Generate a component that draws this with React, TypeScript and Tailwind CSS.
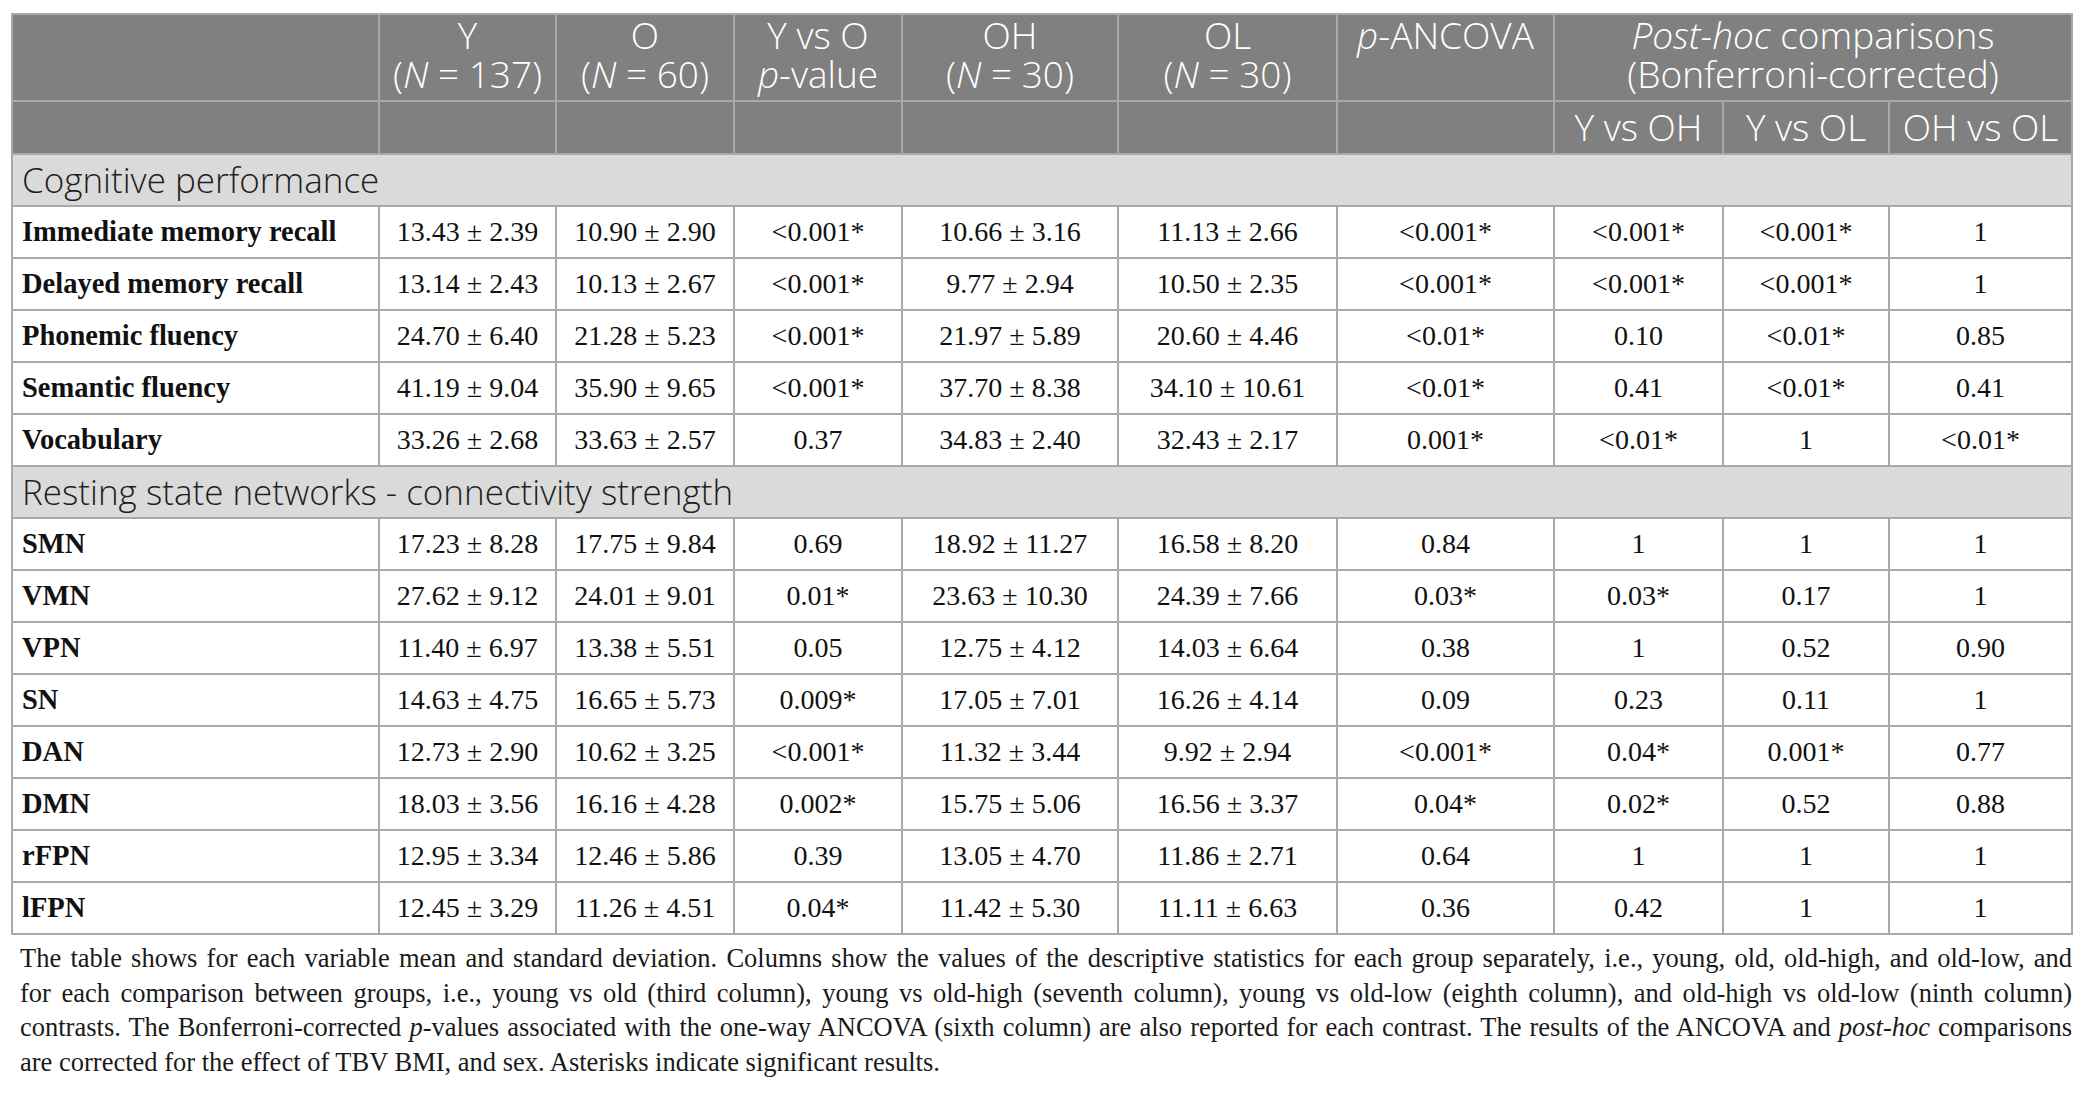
import React from "react";

type Row = { label: string; v: string[] };

const cognitive: Row[] = [
  { label: "Immediate memory recall", v: ["13.43 ± 2.39", "10.90 ± 2.90", "<0.001*", "10.66 ± 3.16", "11.13 ± 2.66", "<0.001*", "<0.001*", "<0.001*", "1"] },
  { label: "Delayed memory recall", v: ["13.14 ± 2.43", "10.13 ± 2.67", "<0.001*", "9.77 ± 2.94", "10.50 ± 2.35", "<0.001*", "<0.001*", "<0.001*", "1"] },
  { label: "Phonemic fluency", v: ["24.70 ± 6.40", "21.28 ± 5.23", "<0.001*", "21.97 ± 5.89", "20.60 ± 4.46", "<0.01*", "0.10", "<0.01*", "0.85"] },
  { label: "Semantic fluency", v: ["41.19 ± 9.04", "35.90 ± 9.65", "<0.001*", "37.70 ± 8.38", "34.10 ± 10.61", "<0.01*", "0.41", "<0.01*", "0.41"] },
  { label: "Vocabulary", v: ["33.26 ± 2.68", "33.63 ± 2.57", "0.37", "34.83 ± 2.40", "32.43 ± 2.17", "0.001*", "<0.01*", "1", "<0.01*"] },
];

const resting: Row[] = [
  { label: "SMN", v: ["17.23 ± 8.28", "17.75 ± 9.84", "0.69", "18.92 ± 11.27", "16.58 ± 8.20", "0.84", "1", "1", "1"] },
  { label: "VMN", v: ["27.62 ± 9.12", "24.01 ± 9.01", "0.01*", "23.63 ± 10.30", "24.39 ± 7.66", "0.03*", "0.03*", "0.17", "1"] },
  { label: "VPN", v: ["11.40 ± 6.97", "13.38 ± 5.51", "0.05", "12.75 ± 4.12", "14.03 ± 6.64", "0.38", "1", "0.52", "0.90"] },
  { label: "SN", v: ["14.63 ± 4.75", "16.65 ± 5.73", "0.009*", "17.05 ± 7.01", "16.26 ± 4.14", "0.09", "0.23", "0.11", "1"] },
  { label: "DAN", v: ["12.73 ± 2.90", "10.62 ± 3.25", "<0.001*", "11.32 ± 3.44", "9.92 ± 2.94", "<0.001*", "0.04*", "0.001*", "0.77"] },
  { label: "DMN", v: ["18.03 ± 3.56", "16.16 ± 4.28", "0.002*", "15.75 ± 5.06", "16.56 ± 3.37", "0.04*", "0.02*", "0.52", "0.88"] },
  { label: "rFPN", v: ["12.95 ± 3.34", "12.46 ± 5.86", "0.39", "13.05 ± 4.70", "11.86 ± 2.71", "0.64", "1", "1", "1"] },
  { label: "lFPN", v: ["12.45 ± 3.29", "11.26 ± 4.51", "0.04*", "11.42 ± 5.30", "11.11 ± 6.63", "0.36", "0.42", "1", "1"] },
];

const widths = [367, 177, 178, 168, 216, 219, 217, 169, 166, 183];

const hd =
  "border-2 border-[#a9a9a9] bg-[#808080] text-white text-center align-top font-['Open_Sans',sans-serif] font-light text-[37px] leading-[39px] pt-0 px-0 whitespace-nowrap";
const hd2 =
  "border-2 border-[#a9a9a9] bg-[#808080] text-white text-center align-middle font-['Open_Sans',sans-serif] font-light text-[37px] leading-[39px] pb-[3px] px-0 whitespace-nowrap";
const sec =
  "border-2 border-[#a9a9a9] bg-[#dadada] text-[#1e1e1e] text-left align-middle font-['Open_Sans',sans-serif] font-light text-[35px] leading-[40px] pl-[9px]";
const lab =
  "border-2 border-[#a9a9a9] bg-white text-[#111] text-left align-middle font-['Liberation_Serif',serif] font-bold text-[28.5px] pl-[9px] whitespace-nowrap";
const val =
  "border-2 border-[#a9a9a9] bg-white text-[#111] text-center align-middle font-['Liberation_Serif',serif] text-[28px] whitespace-nowrap";

function DataRow({ r }: { r: Row }) {
  return (
    <tr className="h-[52px]">
      <td className={lab}>{r.label}</td>
      {r.v.map((x, i) => (
        <td key={i} className={val}>
          {x}
        </td>
      ))}
    </tr>
  );
}

export default function App() {
  return (
    <div className="min-h-screen bg-white pl-[11px] pt-[13px]">
      <table className="table-fixed border-collapse w-[2061px]">
        <colgroup>
          {widths.map((w, i) => (
            <col key={i} style={{ width: w }} />
          ))}
        </colgroup>
        <thead>
          <tr className="h-[87px]">
            <th className={hd}></th>
            <th className={hd}>
              Y<br />(<i>N</i> = 137)
            </th>
            <th className={hd}>
              O<br />(<i>N</i> = 60)
            </th>
            <th className={hd}>
              Y vs O<br />
              <i>p</i>-value
            </th>
            <th className={hd}>
              OH<br />(<i>N</i> = 30)
            </th>
            <th className={hd}>
              OL<br />(<i>N</i> = 30)
            </th>
            <th className={hd}>
              <i>p</i>-ANCOVA
            </th>
            <th className={hd} colSpan={3}>
              <i>Post-hoc</i> comparisons
              <br />
              (Bonferroni-corrected)
            </th>
          </tr>
          <tr className="h-[53px]">
            <th className={hd2}></th>
            <th className={hd2}></th>
            <th className={hd2}></th>
            <th className={hd2}></th>
            <th className={hd2}></th>
            <th className={hd2}></th>
            <th className={hd2}></th>
            <th className={hd2}>Y vs OH</th>
            <th className={hd2}>Y vs OL</th>
            <th className={hd2}>OH vs OL</th>
          </tr>
        </thead>
        <tbody>
          <tr className="h-[52px]">
            <td className={sec} colSpan={10}>
              Cognitive performance
            </td>
          </tr>
          {cognitive.map((r) => (
            <DataRow key={r.label} r={r} />
          ))}
          <tr className="h-[52px]">
            <td className={sec} colSpan={10}>
              Resting state networks - connectivity strength
            </td>
          </tr>
          {resting.map((r) => (
            <DataRow key={r.label} r={r} />
          ))}
        </tbody>
      </table>
      <div className="w-[2061px] pl-[9px] pt-[6px] font-['Liberation_Serif',serif] text-[26.5px] leading-[34.5px] text-[#1a1a1a]">
        <div className="text-justify [text-align-last:justify]">
          The table shows for each variable mean and standard deviation. Columns show the values of the descriptive statistics for each group separately, i.e., young, old, old-high, and old-low, and
        </div>
        <div className="text-justify [text-align-last:justify]">
          for each comparison between groups, i.e., young vs old (third column), young vs old-high (seventh column), young vs old-low (eighth column), and old-high vs old-low (ninth column)
        </div>
        <div className="text-justify [text-align-last:justify]">
          contrasts. The Bonferroni-corrected <i>p</i>-values associated with the one-way ANCOVA (sixth column) are also reported for each contrast. The results of the ANCOVA and <i>post-hoc</i> comparisons
        </div>
        <div>
          are corrected for the effect of TBV BMI, and sex. Asterisks indicate significant results.
        </div>
      </div>
    </div>
  );
}
